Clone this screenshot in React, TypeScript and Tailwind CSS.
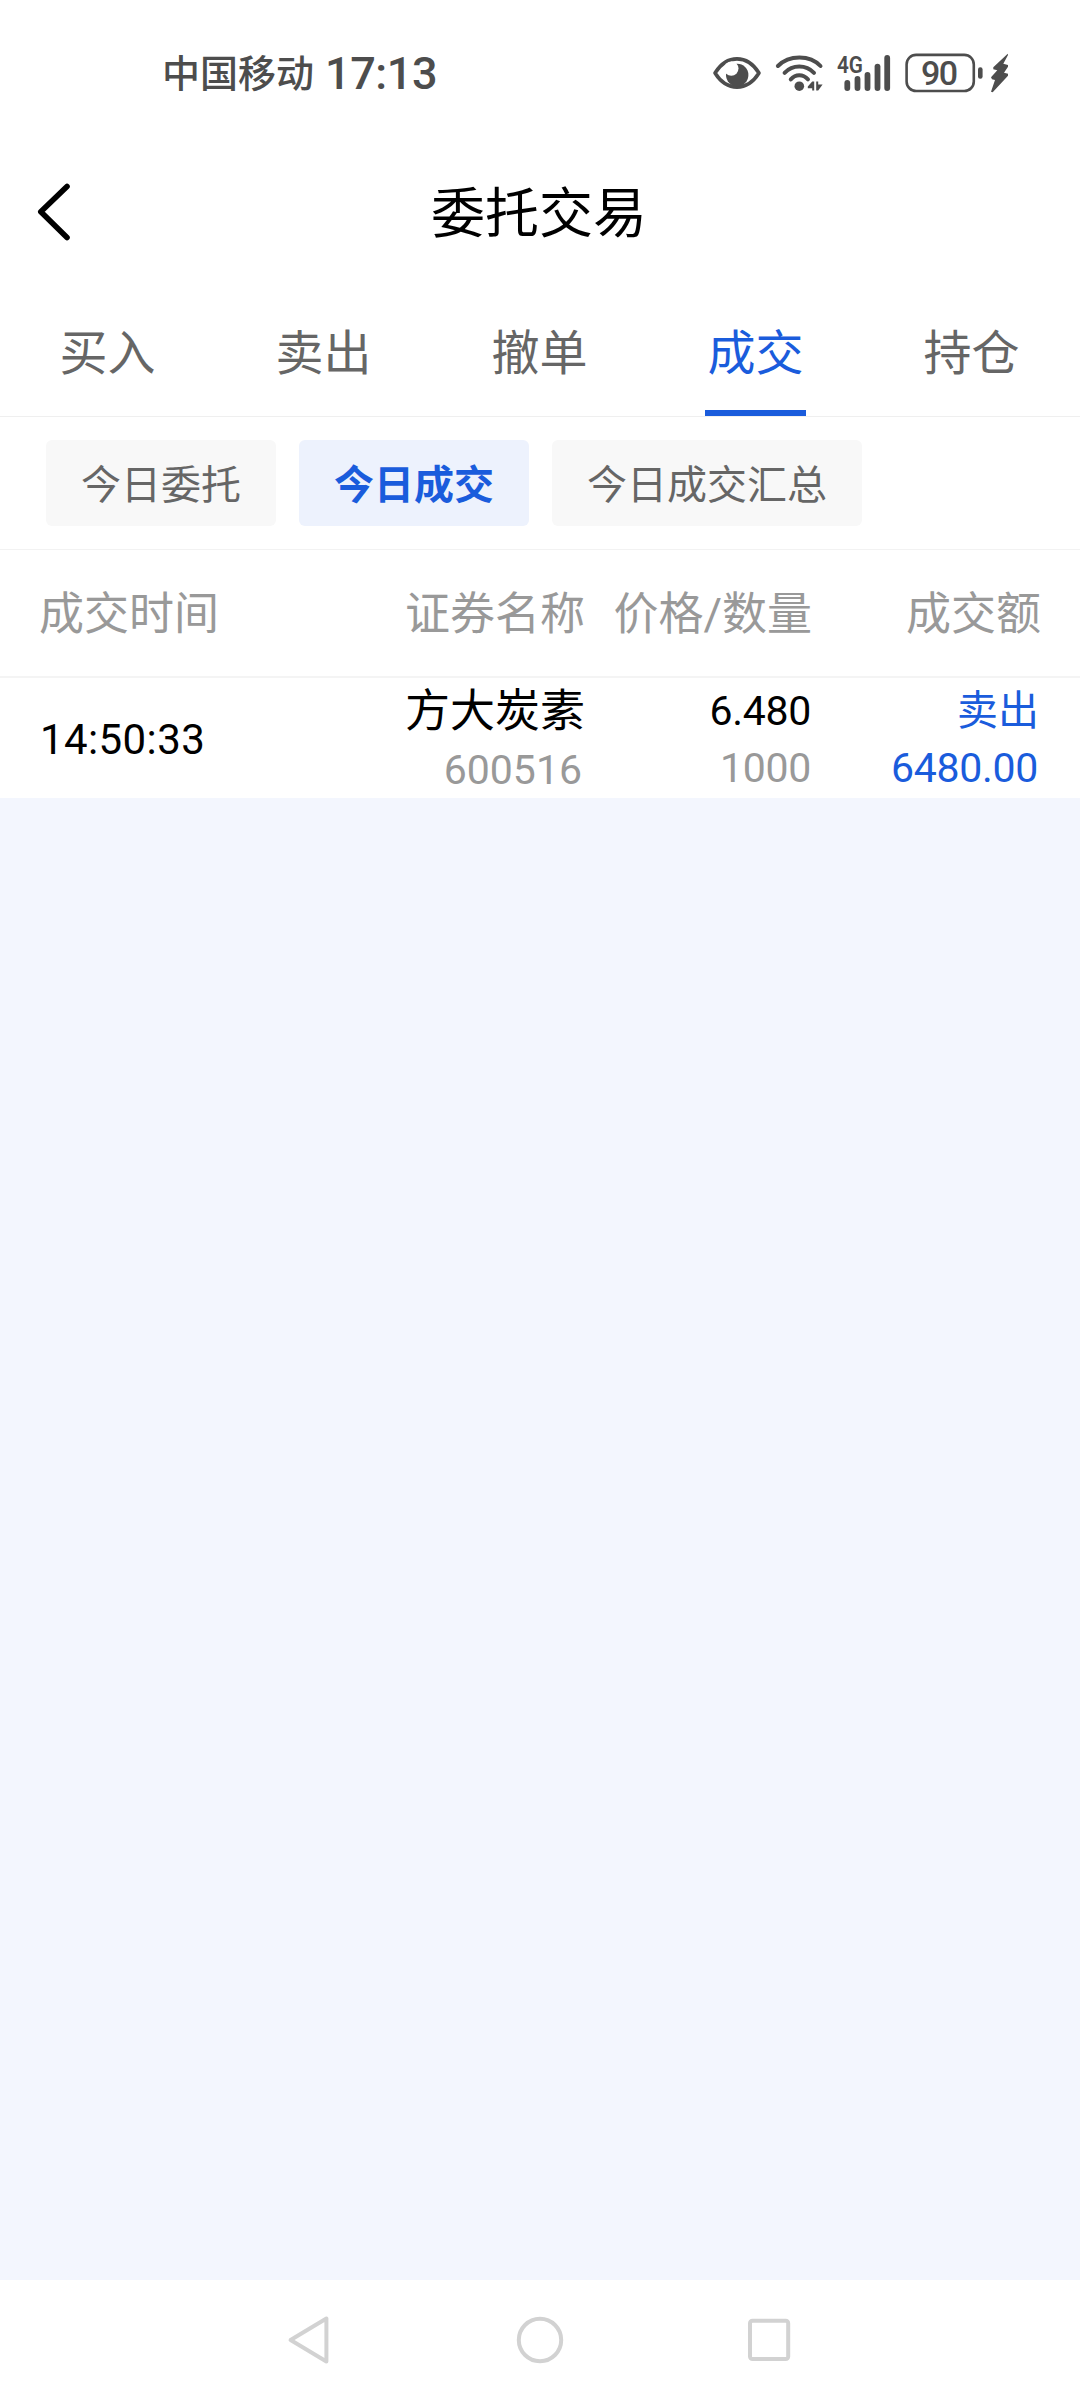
import clsx from "clsx";

const tabs = ["买入", "卖出", "撤单", "成交", "持仓"];
const filters = ["今日委托", "今日成交", "今日成交汇总"];

const deals = [
  {
    time: "14:50:33",
    name: "方大炭素",
    code: "600516",
    price: "6.480",
    count: "1000",
    side: "卖出",
    amount: "6480.00",
  },
];

function EyeIcon() {
  return (
    <svg width="50" height="36" viewBox="0 0 50 36">
      <path
        d="M3 18 C9 8.5 17 3.9 25 3.9 S41 8.5 47 18 C41 27.5 33 32.1 25 32.1 S9 27.5 3 18Z"
        fill="none"
        stroke="#4d4d4d"
        strokeWidth="3.6"
        strokeLinejoin="round"
      />
      <circle cx="25.2" cy="20" r="11.2" fill="#4d4d4d" />
      <circle cx="19.3" cy="13.6" r="7.2" fill="#fff" />
    </svg>
  );
}

function WifiIcon() {
  return (
    <svg width="50" height="40" viewBox="0 0 50 40">
      <g fill="none" stroke="#4d4d4d" strokeWidth="4" strokeLinecap="round">
        <path d="M3.9 13 C15 1.6 36 1.6 46.5 13" />
        <path d="M10.6 19.8 C18.5 11.4 32 11.4 40 19.8" />
        <path d="M16.8 26.4 C21.5 21 29 21 34 26.4" />
      </g>
      <circle cx="25.3" cy="33.2" r="4.8" fill="#4d4d4d" />
      <path
        d="M33.8 33.5 L38.2 28.6 H40.2 V37.6 H38.2 V35.2 H33.8Z M42.2 28.6 H44.2 V31.5 H48.6 L44.2 37.6 H42.2Z"
        fill="#4d4d4d"
      />
    </svg>
  );
}

function SignalIcon() {
  return (
    <svg width="54" height="56" viewBox="0 -8 54 56">
      <text
        x="0"
        y="19.5"
        textLength="26"
        lengthAdjust="spacingAndGlyphs"
        fontSize="24"
        fontWeight="600"
        fill="#4d4d4d"
      >
        4G
      </text>
      <g stroke="#4d4d4d" strokeWidth="5.8" strokeLinecap="round">
        <path d="M10.3 29.9V35" />
        <path d="M20.5 25.9V35" />
        <path d="M30.5 21.9V35" />
        <path d="M40.5 13.6V35" />
        <path d="M50.2 4.9V35" />
      </g>
    </svg>
  );
}

function BatteryIcon() {
  return (
    <svg width="106" height="44" viewBox="0 0 106 44">
      <rect
        x="3.6"
        y="3.9"
        width="67.2"
        height="36.1"
        rx="9.5"
        fill="none"
        stroke="#4d4d4d"
        strokeWidth="2.6"
      />
      <rect x="75" y="16.2" width="4.6" height="11.6" rx="2.2" fill="#4d4d4d" />
      <text
        x="36.6"
        y="34"
        textAnchor="middle"
        textLength="37"
        fontSize="34"
        fontWeight="500"
        fill="#4d4d4d"
      >
        90
      </text>
      <path
        d="M104.7 2.7 L90.3 16.3 V18.3 L94.3 19.3 L88 26.3 L89 28.3 L92 29 L88 40.7 L89.7 41.3 L105 24.7 V22.7 L101 21.7 L105 15.7 V14 L100.3 12.7 L105 4Z"
        fill="#4d4d4d"
      />
    </svg>
  );
}

function StatusBar() {
  return (
    <div className="flex h-[146px] items-center justify-between pr-[71px] pl-[162px] text-[#4d4d4d]">
      <div className="flex items-center gap-[11px] font-medium">
        <span className="pt-[2px] text-[38px]">中国移动</span>
        <span className="text-[45px] tracking-[-0.4px]">17:13</span>
      </div>
      <div className="flex items-center">
        <EyeIcon />
        <span className="w-[12px]" />
        <WifiIcon />
        <span className="w-[13px]" />
        <SignalIcon />
        <span className="w-[12px]" />
        <BatteryIcon />
      </div>
    </div>
  );
}

function Header() {
  return (
    <div className="grid h-[134px] grid-cols-[1fr_auto_1fr] items-center px-[36px]">
      <svg width="36" height="62" viewBox="0 0 36 62">
        <path
          d="M31 4.5 L4.8 29.8 L31 55.5"
          fill="none"
          stroke="#000"
          strokeWidth="5.6"
          strokeLinecap="round"
          strokeLinejoin="round"
        />
      </svg>
      <h1 className="pt-[4px] pr-[2px] text-[54px] text-black">委托交易</h1>
    </div>
  );
}

export default function App() {
  return (
    <div className="flex h-[2400px] w-[1080px] flex-col bg-[#f3f6fe] font-['Roboto','Noto_Sans_CJK_SC',sans-serif] leading-none">
      <div className="bg-white">
        <StatusBar />
        <Header />

        <div className="flex h-[137px] border-b border-[#efefef]">
          {tabs.map((tab) => (
            <div key={tab} className="flex flex-1 justify-center pr-px">
              <span
                className={clsx(
                  "flex w-[101px] items-center justify-center border-b-[6px] pt-[18px] text-[48px]",
                  tab === "成交"
                    ? "border-[#1a5cdc] text-[#1a5cdc]"
                    : "border-transparent text-[#666]",
                )}
              >
                {tab}
              </span>
            </div>
          ))}
        </div>

        <div className="flex h-[133px] gap-[23px] border-b border-[#f2f2f2] px-[46px] pt-[23px]">
          {filters.map((filter) => (
            <div
              key={filter}
              className={clsx(
                "flex h-[86px] items-center rounded-md px-[35px] pt-[5px] text-[40px]",
                filter === "今日成交"
                  ? "bg-[#edf2fd] font-bold text-[#1a5cdc]"
                  : "bg-[#f8f8f8] text-[#666]",
              )}
            >
              {filter}
            </div>
          ))}
        </div>

        <div className="grid h-[128px] grid-cols-[320px_226px_227px_229px] items-center border-b-2 border-[#f4f4f4] px-[39px] pt-[3px] text-right text-[45px] text-[#999]">
          <span className="text-left">成交时间</span>
          <span>证券名称</span>
          <span>价格/数量</span>
          <span>成交额</span>
        </div>

        {deals.map((deal) => (
          <div
            key={deal.time}
            className="grid h-[120px] grid-cols-[320px_226px_227px_229px] items-center px-[39px] text-right text-[41px] text-black"
          >
            <span className="pt-px pl-px text-left text-[42px] tracking-[0.4px]">
              {deal.time}
            </span>
            <div className="flex flex-col pt-[4px] leading-[59px]">
              <span className="text-[45px]">{deal.name}</span>
              <span className="pr-[3px] text-[#999]">{deal.code}</span>
            </div>
            <div className="flex flex-col pt-px pr-px leading-[57px] tracking-[-0.3px]">
              <span>{deal.price}</span>
              <span className="text-[#999]">{deal.count}</span>
            </div>
            <div className="flex flex-col pt-[2px] pr-[2px] leading-[57px] text-[#1a5cdc]">
              <span>{deal.side}</span>
              <span className="pr-px tracking-[-0.3px]">{deal.amount}</span>
            </div>
          </div>
        ))}
      </div>

      <div className="mt-auto flex h-[120px] items-center justify-center gap-[179px] bg-white">
        <svg width="50" height="50" viewBox="0 0 50 50" fill="none">
          <path
            d="M4.6 25 L40.4 3.5 V46.5Z"
            stroke="#d2d2d2"
            strokeWidth="4"
            strokeLinejoin="round"
          />
        </svg>
        <svg width="50" height="50" viewBox="0 0 50 50" fill="none">
          <circle cx="25" cy="25" r="21.2" stroke="#d2d2d2" strokeWidth="4" />
        </svg>
        <svg width="50" height="50" viewBox="0 0 50 50" fill="none">
          <rect x="6" y="5.8" width="38.2" height="38.2" rx="2.5" stroke="#d2d2d2" strokeWidth="4" />
        </svg>
      </div>
    </div>
  );
}
